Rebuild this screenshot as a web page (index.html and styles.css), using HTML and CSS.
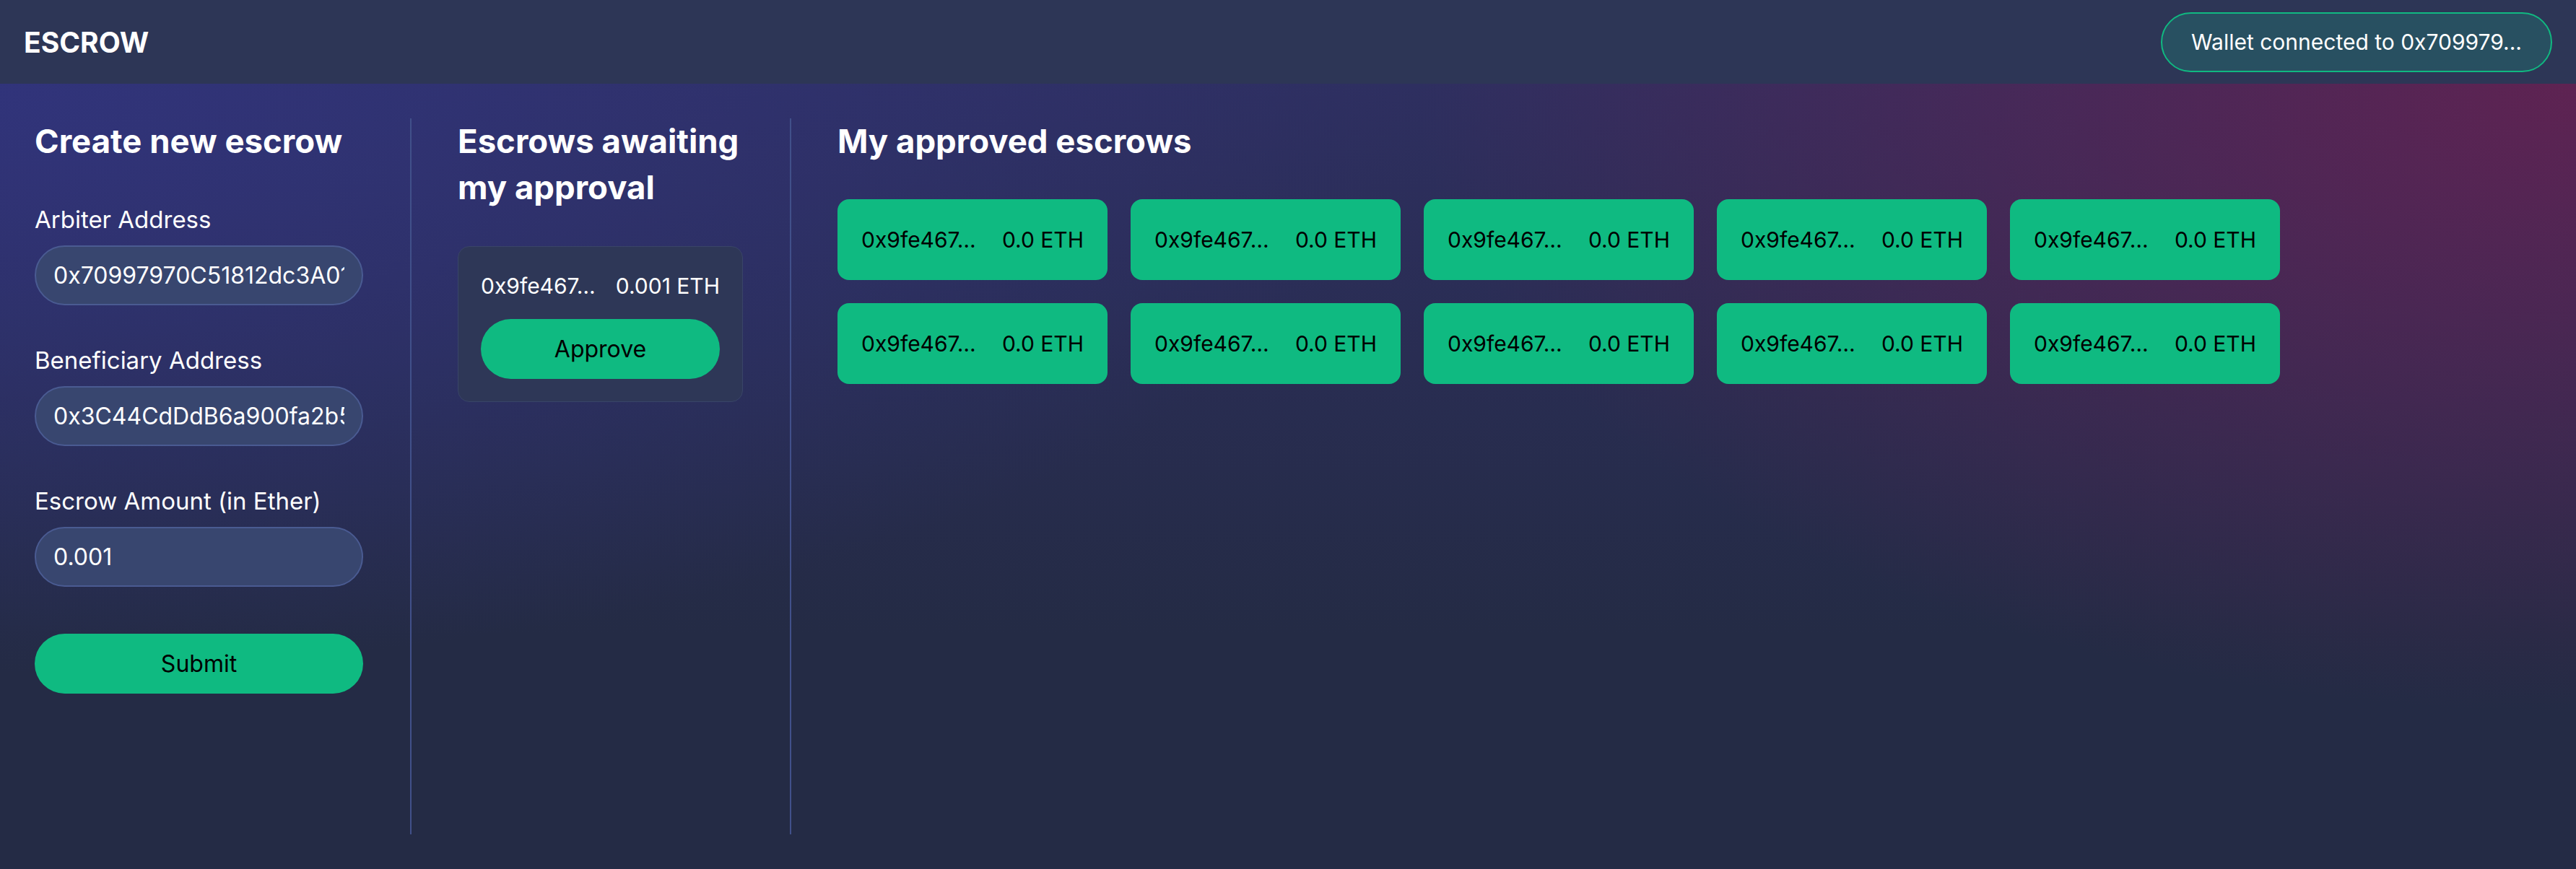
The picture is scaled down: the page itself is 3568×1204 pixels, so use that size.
FILE: index.html
```html
<!DOCTYPE html>
<html lang="en">
<head>
<meta charset="utf-8">
<title>Escrow</title>
<link rel="stylesheet" href="styles.css">
</head>
<body>
<header class="topbar">
  <div class="brand">ESCROW</div>
  <button class="wallet" type="button">Wallet connected to 0x709979...</button>
</header>
<main class="board">
  <section class="col col-create">
    <h2 class="col-title">Create new escrow</h2>
    <div class="field">
      <label class="field-label" for="arbiter">Arbiter Address</label>
      <input class="field-input" id="arbiter" type="text" value="0x70997970C51812dc3A010C7d01b50e0d17dc79C8">
    </div>
    <div class="field">
      <label class="field-label" for="beneficiary">Beneficiary Address</label>
      <input class="field-input" id="beneficiary" type="text" value="0x3C44CdDdB6a900fa2b585dd299e03d12FA4293BC">
    </div>
    <div class="field">
      <label class="field-label" for="amount">Escrow Amount (in Ether)</label>
      <input class="field-input" id="amount" type="text" value="0.001">
    </div>
    <button class="btn-green btn-submit" type="button">Submit</button>
  </section>
  <div class="divider"></div>
  <section class="col col-await">
    <h2 class="col-title">Escrows awaiting my approval</h2>
    <div class="await-card">
      <div class="escrow-row">
        <span>0x9fe467…</span>
        <span>0.001 ETH</span>
      </div>
      <button class="btn-green btn-approve" type="button">Approve</button>
    </div>
  </section>
  <div class="divider"></div>
  <section class="col col-approved">
    <h2 class="col-title">My approved escrows</h2>
    <div class="approved-grid">
      <div class="approved-card"><span>0x9fe467…</span><span>0.0 ETH</span></div>
      <div class="approved-card"><span>0x9fe467…</span><span>0.0 ETH</span></div>
      <div class="approved-card"><span>0x9fe467…</span><span>0.0 ETH</span></div>
      <div class="approved-card"><span>0x9fe467…</span><span>0.0 ETH</span></div>
      <div class="approved-card"><span>0x9fe467…</span><span>0.0 ETH</span></div>
      <div class="approved-card"><span>0x9fe467…</span><span>0.0 ETH</span></div>
      <div class="approved-card"><span>0x9fe467…</span><span>0.0 ETH</span></div>
      <div class="approved-card"><span>0x9fe467…</span><span>0.0 ETH</span></div>
      <div class="approved-card"><span>0x9fe467…</span><span>0.0 ETH</span></div>
      <div class="approved-card"><span>0x9fe467…</span><span>0.0 ETH</span></div>
    </div>
  </section>
</main>
</body>
</html>
```

FILE: styles.css
```css
* { box-sizing: border-box; }

html, body {
  margin: 0;
  padding: 0;
}

body {
  width: 3568px;
  height: 1204px;
  overflow: hidden;
  font-family: Inter, "Noto Sans", "Liberation Sans", sans-serif;
  color: #ffffff;
  background: #242b45;
  display: flex;
  flex-direction: column;
}

.topbar {
  height: 116px;
  flex: none;
  background: #2d3656;
  display: flex;
  align-items: center;
  justify-content: space-between;
  padding: 0 33px 0 33px;
}

.brand {
  font-size: 39px;
  font-weight: 700;
  letter-spacing: 0;
  line-height: 1;
}

.wallet {
  height: 83px;
  padding: 0 40px;
  border-radius: 999px;
  border: 2px solid #10b981;
  background: #285061;
  color: #ffffff;
  font-family: inherit;
  font-size: 30px;
  font-weight: 400;
  cursor: pointer;
}

.board {
  flex: 1;
  display: flex;
  align-items: stretch;
  padding: 48px;
  background:
    radial-gradient(ellipse 55% 75% at 0% 0%, rgba(49, 52, 124, 0.95), rgba(49, 52, 124, 0) 100%),
    radial-gradient(ellipse 45% 80% at 100% 0%, rgba(94, 35, 82, 1), rgba(94, 35, 82, 0) 100%),
    linear-gradient(180deg, #2e2f60 0%, #242b45 70%);
}

.col-title {
  margin: 0;
  font-size: 45.5px;
  font-weight: 700;
  line-height: 64px;
}

.col-create {
  width: 455px;
  flex: none;
  display: flex;
  flex-direction: column;
}

.field {
  margin-top: 52px;
  display: flex;
  flex-direction: column;
}

.field-label {
  font-size: 33px;
  line-height: 48px;
  margin-bottom: 12px;
}

.field-input {
  width: 100%;
  height: 83px;
  border-radius: 999px;
  border: 2px solid #4a5b92;
  background: #38466f;
  color: #ffffff;
  font-family: inherit;
  font-size: 32px;
  padding: 0 24px;
  outline: none;
}

.btn-green {
  height: 83px;
  border: none;
  border-radius: 999px;
  background: #0fba81;
  color: #000000;
  font-family: inherit;
  font-size: 32px;
  font-weight: 400;
  cursor: pointer;
}

.btn-submit {
  margin-top: 65px;
  width: 100%;
}

.divider {
  width: 2px;
  flex: none;
  background: #41508a;
  margin: 0 64px 0 65px;
}

.col-await {
  width: 395px;
  flex: none;
  display: flex;
  flex-direction: column;
}

.await-card {
  margin-top: 49px;
  padding: 30px 31px 31px;
  border-radius: 16px;
  border: 1px solid #394468;
  background: #2e3757;
  display: flex;
  flex-direction: column;
  gap: 22px;
}

.escrow-row {
  display: flex;
  justify-content: space-between;
  font-size: 30px;
  line-height: 48px;
}

.btn-approve {
  width: 100%;
}

.col-approved {
  flex: 1;
  display: flex;
  flex-direction: column;
}

.approved-grid {
  margin-top: 48px;
  display: grid;
  grid-template-columns: repeat(5, 374px);
  gap: 32px;
}

.approved-card {
  height: 112px;
  border-radius: 16px;
  background: #0fba81;
  color: #000000;
  display: flex;
  align-items: center;
  justify-content: space-between;
  padding: 0 33px;
  font-size: 30px;
}
```
